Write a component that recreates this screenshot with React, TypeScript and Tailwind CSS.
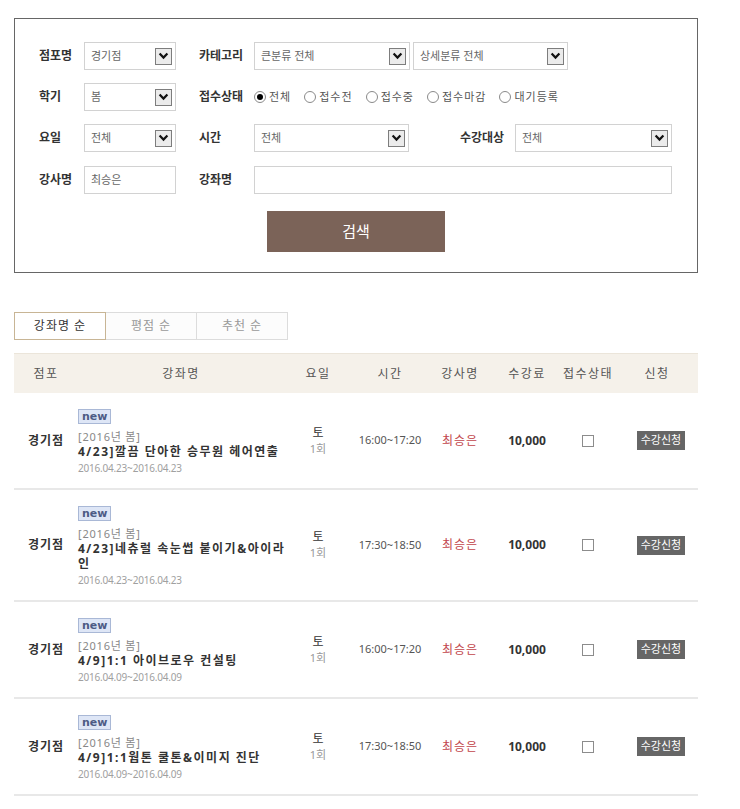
import React from 'react';

const Arrow = () => (
  <div className="flex h-[17px] w-[17px] items-center justify-center border border-[#7d7d7d] bg-[#ebebeb]">
    <svg width="11" height="8" viewBox="0 0 11 8">
      <polyline points="1.6,1.6 5.5,5.6 9.4,1.6" fill="none" stroke="#111" strokeWidth="2.2" />
    </svg>
  </div>
);

function Select({ w, text }: { w: string; text: string }) {
  return (
    <div className={`flex h-[28px] items-center justify-between border border-[#d2d2d2] bg-white pl-[6px] pr-[3px] ${w}`}>
      <span className="text-[11px] text-[#666]">{text}</span>
      <Arrow />
    </div>
  );
}

function Label({ children, w, cls = '' }: { children: React.ReactNode; w: string; cls?: string }) {
  return <span className={`text-[12px] font-bold text-[#333] ${w} ${cls}`}>{children}</span>;
}

function Radio({ checked, label }: { checked?: boolean; label: string }) {
  return (
    <span className="mr-[13px] flex items-center">
      <span className="flex h-[12px] w-[12px] items-center justify-center rounded-full border border-[#8a8a8a] bg-white">
        {checked && <span className="h-[6px] w-[6px] rounded-full bg-black" />}
      </span>
      <span className="ml-[3px] text-[11px] tracking-[1px] text-[#555]">{label}</span>
    </span>
  );
}

type Row = { title: string; date: string; time: string };

const rows: Row[] = [
  { title: '4/23]깔끔 단아한 승무원 헤어연출', date: '2016.04.23~2016.04.23', time: '16:00~17:20' },
  { title: '4/23]네츄럴 속눈썹 붙이기&아이라인', date: '2016.04.23~2016.04.23', time: '17:30~18:50' },
  { title: '4/9]1:1 아이브로우 컨설팅', date: '2016.04.09~2016.04.09', time: '16:00~17:20' },
  { title: '4/9]1:1웜톤 쿨톤&이미지 진단', date: '2016.04.09~2016.04.09', time: '17:30~18:50' },
];

const cols = 'grid grid-cols-[64px_214px_52px_92px_48px_86px_36px_92px]';

export default function App() {
  return (
    <div className="h-[809px] w-[740px] overflow-hidden bg-white pl-[14px] pt-[18px] font-['Noto_Sans','Noto_Sans_CJK_KR',sans-serif]">
      {/* search box */}
      <div className="h-[255px] w-[684px] border border-[#666] pl-[24px] pt-[23px]">
        <div className="flex h-[28px] items-center">
          <Label w="w-[45px]">점포명</Label>
          <Select w="w-[92px]" text="경기점" />
          <Label w="w-[55px]" cls="ml-[23px]">카테고리</Label>
          <Select w="w-[156px]" text="큰분류 전체" />
          <div className="ml-[3px]">
            <Select w="w-[155px]" text="상세분류 전체" />
          </div>
        </div>
        <div className="mt-[13px] flex h-[28px] items-center">
          <Label w="w-[45px]">학기</Label>
          <Select w="w-[92px]" text="봄" />
          <Label w="w-[55px]" cls="ml-[23px]">접수상태</Label>
          <Radio checked label="전체" />
          <Radio label="접수전" />
          <Radio label="접수중" />
          <Radio label="접수마감" />
          <Radio label="대기등록" />
        </div>
        <div className="mt-[13px] flex h-[28px] items-center">
          <Label w="w-[45px]">요일</Label>
          <Select w="w-[92px]" text="전체" />
          <Label w="w-[55px]" cls="ml-[23px]">시간</Label>
          <Select w="w-[155px]" text="전체" />
          <Label w="w-[55px]" cls="ml-[51px]">수강대상</Label>
          <Select w="w-[157px]" text="전체" />
        </div>
        <div className="mt-[14px] flex h-[28px] items-center">
          <Label w="w-[45px]">강사명</Label>
          <div className="flex h-[28px] w-[92px] items-center border border-[#d2d2d2] pl-[6px] text-[11px] text-[#666]">최승은</div>
          <Label w="w-[55px]" cls="ml-[23px]">강좌명</Label>
          <div className="h-[28px] w-[418px] border border-[#d2d2d2]" />
        </div>
        <div className="ml-[228px] mt-[17px] flex h-[41px] w-[178px] items-center justify-center bg-[#7b6358] text-[15px] text-white">
          검색
        </div>
      </div>

      {/* tabs */}
      <div className="mt-[39px] flex h-[28px]">
        <div className="relative z-10 flex w-[92px] items-center justify-center border border-[#c8b595] bg-white text-[12px] tracking-[1px] text-[#333]">
          강좌명 순
        </div>
        <div className="-ml-px flex w-[92px] items-center justify-center border border-[#dcdcdc] bg-[#fcfcfc] text-[12px] tracking-[1px] text-[#999]">
          평점 순
        </div>
        <div className="-ml-px flex w-[92px] items-center justify-center border border-[#dcdcdc] bg-[#fcfcfc] text-[12px] tracking-[1px] text-[#999]">
          추천 순
        </div>
      </div>

      {/* table */}
      <div className="mt-[13px] w-[684px]">
        <div className={`${cols} h-[40px] items-center border-t border-[#ebe5da] bg-[#f5f1ea] text-[12px] tracking-[1.5px] text-[#555]`}>
          <div className="flex justify-center">점포</div>
          <div className="flex justify-center pr-[8px]">강좌명</div>
          <div className="flex justify-center">요일</div>
          <div className="flex justify-center">시간</div>
          <div className="flex justify-center whitespace-nowrap">강사명</div>
          <div className="flex justify-center">수강료</div>
          <div className="flex justify-center whitespace-nowrap">접수상태</div>
          <div className="flex justify-center pl-[10px]">신청</div>
        </div>
        {rows.map((r, i) => (
          <div key={i} className={`${cols} items-center border-b-2 border-[#e8e8e8]`}>
            <div className="flex justify-center text-[12px] font-bold tracking-[1px] text-[#333]">경기점</div>
            <div className="pb-[13px] pr-[6px] pt-[16px]">
              <div className="flex">
                <span className="flex h-[15px] items-center border border-[#a9b8d6] bg-[#dee6f6] px-[3px] font-['DejaVu_Sans',sans-serif] text-[11px] font-bold leading-none text-[#4d5b85]">
                  new
                </span>
              </div>
              <div className="mt-[5px] text-[11px] leading-[15px] tracking-[0.8px] text-[#888]">[2016년 봄]</div>
              <div className="text-[12px] font-bold leading-[15px] tracking-[1.5px] text-[#333]">{r.title}</div>
              <div className="mt-[2px] text-[10px] leading-[14px] tracking-[-0.2px] text-[#a0a0a0]">{r.date}</div>
            </div>
            <div className="flex flex-col items-center">
              <span className="text-[12px] leading-[16px] text-[#333]">토</span>
              <span className="text-[11px] leading-[16px] text-[#999]">1회</span>
            </div>
            <div className="flex justify-center text-[11px] text-[#555]">{r.time}</div>
            <div className="flex justify-center whitespace-nowrap text-[12px] tracking-[1px] text-[#c2454b]">최승은</div>
            <div className="flex justify-center text-[12px] font-bold text-[#333]">10,000</div>
            <div className="flex justify-center">
              <span className="h-[12px] w-[12px] border border-[#8c8c8c] bg-white" />
            </div>
            <div className="flex justify-center pl-[18px]">
              <span className="flex h-[19px] items-center bg-[#666] px-[4px] text-[11px] text-white">수강신청</span>
            </div>
          </div>
        ))}
      </div>
    </div>
  );
}
